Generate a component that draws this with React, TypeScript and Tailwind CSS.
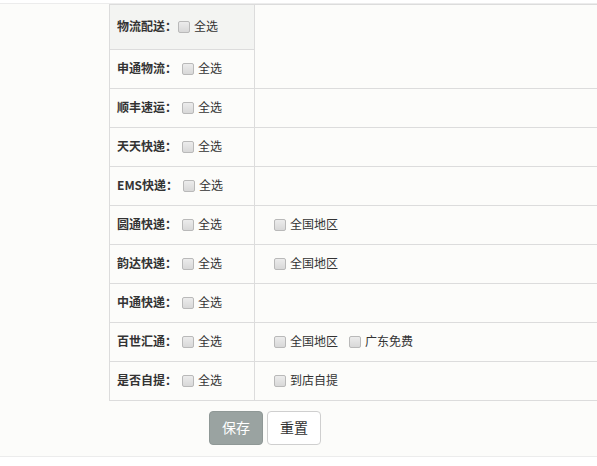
import React from "react";

const font = { fontFamily: '"Noto Sans CJK SC", "Noto Sans", sans-serif' };

function Box({ className = "" }: { className?: string }) {
  return (
    <span
      className={
        "inline-block w-[12px] h-[12px] rounded-[2px] border border-[#b9b9b9] bg-gradient-to-b from-[#ececec] to-[#d8d8d8] shrink-0 " +
        className
      }
    />
  );
}

function Label({ text, first = false }: { text: string; first?: boolean }) {
  return (
    <div className="flex items-center pl-[7px] h-full">
      <span className="mb-[3px] text-[12px] font-bold text-[#333] leading-[16px] whitespace-nowrap">{text}</span>
      <Box className={first ? "ml-[1px]" : "ml-[5px]"} />
      <span className="mb-[3px] ml-[4px] text-[12px] text-[#333] leading-[16px]">全选</span>
    </div>
  );
}

function Opt({ text, className = "" }: { text: string; className?: string }) {
  return (
    <div className={"flex items-center " + className}>
      <Box />
      <span className="mb-[3px] ml-[4px] text-[12px] text-[#333] leading-[16px] whitespace-nowrap">{text}</span>
    </div>
  );
}

const rows: { label: string; opts: string[] }[] = [
  { label: "顺丰速运：", opts: [] },
  { label: "天天快递：", opts: [] },
  { label: "EMS快递：", opts: [] },
  { label: "圆通快递：", opts: ["全国地区"] },
  { label: "韵达快递：", opts: ["全国地区"] },
  { label: "中通快递：", opts: [] },
  { label: "百世汇通：", opts: ["全国地区", "广东免费"] },
  { label: "是否自提：", opts: ["到店自提"] },
];

export default function App() {
  return (
    <div className="w-[597px] h-[466px] bg-white overflow-hidden" style={font}>
      <div className="mt-[3px] border-t border-b border-[#ececec] bg-[#fcfcfa] h-[454px]">
        <div className="ml-[109px] w-[520px] border-l border-t border-[#dcdcdc]">
          <div className="flex border-b border-[#dcdcdc]">
            <div className="w-[145px] border-r border-[#dcdcdc] shrink-0">
              <div className="h-[45px] bg-[#f3f4f2] border-b border-[#dcdcdc]">
                <Label text="物流配送：" first />
              </div>
              <div className="h-[38px]">
                <Label text="申通物流：" />
              </div>
            </div>
            <div className="flex-1" />
          </div>
          {rows.map((r) => (
            <div key={r.label} className="flex h-[39px] border-b border-[#dcdcdc]">
              <div className="w-[145px] border-r border-[#dcdcdc] shrink-0">
                <Label text={r.label} />
              </div>
              <div className="flex-1 flex items-center pl-[19px] gap-[11px]">
                {r.opts.map((o) => (
                  <Opt key={o} text={o} />
                ))}
              </div>
            </div>
          ))}
        </div>
        <div className="flex pl-[209px] mt-[10px] gap-[4px]">
          <button className="w-[54px] h-[34px] rounded-[4px] bg-[#9aa3a1] border border-[#8f9896] text-white text-[14px] leading-[20px] pb-[2px]">
            保存
          </button>
          <button className="w-[54px] h-[34px] rounded-[4px] bg-white border border-[#cfcfcf] text-[#333] text-[14px] leading-[20px] pb-[2px]">
            重置
          </button>
        </div>
      </div>
    </div>
  );
}
